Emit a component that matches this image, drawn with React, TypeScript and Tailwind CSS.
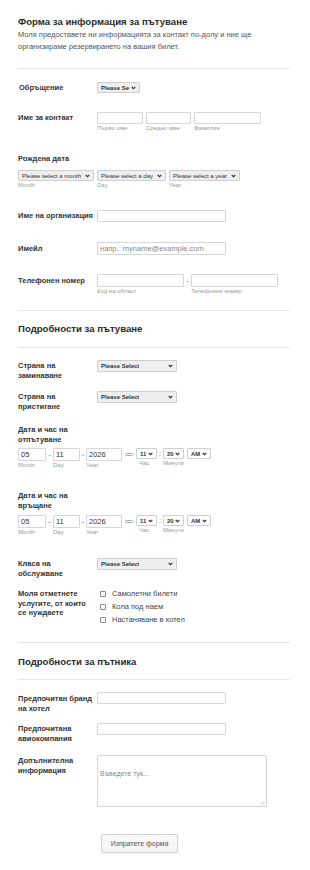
import React from "react";

const Chevron = () => (
  <svg width="5" height="4" viewBox="0 0 10 8" className="shrink-0">
    <polyline points="1.5,2 5,5.5 8.5,2" fill="none" stroke="#333" strokeWidth="2.2" />
  </svg>
);

function Sel({ w, text, bold, gray = true, h = "h-[11px]" }: { w: string; text: string; bold?: boolean; gray?: boolean; h?: string }) {
  return (
    <div
      className={`${w} ${h} flex items-center justify-between border border-[#cfcfcf] rounded-[1px] pl-[3px] pr-[3px] ${gray ? "bg-[#efefef]" : "bg-white"}`}
    >
      <span className={`text-[6px] leading-none text-[#333] whitespace-nowrap overflow-hidden ${bold ? "font-bold" : ""}`}>{text}</span>
      <Chevron />
    </div>
  );
}

function Inp({ w, h = "h-[12px]", value, placeholder }: { w: string; h?: string; value?: string; placeholder?: string }) {
  return (
    <div className={`${w} ${h} border border-[#d6d6d6] bg-white rounded-[1px] flex items-center px-[2px]`}>
      {value && <span className="text-[7.5px] leading-none text-[#333]">{value}</span>}
      {placeholder && <span className="text-[7.5px] leading-none text-[#8a8a8a] whitespace-nowrap">{placeholder}</span>}
    </div>
  );
}

const Sub = ({ children, w }: { children: React.ReactNode; w?: string }) => (
  <div className={`${w ?? ""} text-[6px] leading-[8px] text-[#999] whitespace-nowrap`}>{children}</div>
);

const Label = ({ children, cls = "" }: { children: React.ReactNode; cls?: string }) => (
  <div className={`w-[79px] shrink-0 text-[7.5px] font-bold text-[#333] leading-[9.5px] ${cls}`}>{children}</div>
);

const Divider = ({ cls }: { cls: string }) => <div className={`${cls} h-px bg-[#e6e6e6] w-[272px]`} />;

function DateTimeRow() {
  return (
    <div className="flex items-start">
      <div className="flex flex-col">
        <Inp w="w-[28px]" h="h-[13px]" value="05" />
        <Sub>Month</Sub>
      </div>
      <div className="w-[7px] text-center text-[7px] leading-[13px] text-[#666]">-</div>
      <div className="flex flex-col">
        <Inp w="w-[27px]" h="h-[13px]" value="11" />
        <Sub>Day</Sub>
      </div>
      <div className="w-[6px] text-center text-[7px] leading-[13px] text-[#666]">-</div>
      <div className="flex flex-col">
        <Inp w="w-[36px]" h="h-[13px]" value="2026" />
        <Sub>Year</Sub>
      </div>
      <div className="w-[14px] h-[13px] flex items-center justify-center">
        <div className="w-[8px] h-[3px] border border-[#aaa] rounded-full" />
      </div>
      <div className="flex flex-col">
        <Sel w="w-[21px]" text="11" bold gray={false} />
        <div className="pl-[3px]"><Sub>Час</Sub></div>
      </div>
      <div className="w-[6px] text-center text-[7px] leading-[11px] text-[#666]">:</div>
      <div className="flex flex-col">
        <Sel w="w-[21px]" text="20" bold gray={false} />
        <Sub>Минути</Sub>
      </div>
      <div className="ml-[3px]">
        <Sel w="w-[24px]" text="AM" bold gray={false} />
      </div>
    </div>
  );
}

const Checkbox = ({ text }: { text: string }) => (
  <div className="h-[13px] flex items-center">
    <div className="ml-[3px] w-[6px] h-[6px] border border-[#888] rounded-[1px] bg-white" />
    <span className="ml-[6px] text-[7.5px] leading-none text-[#444]">{text}</span>
  </div>
);

export default function App() {
  return (
    <div className="w-[310px] h-[870px] bg-white pl-[18px] font-['Liberation_Sans',Arial,sans-serif] text-[#333]">
      <div className="pt-[16px]">
        <h1 className="text-[9.6px] leading-[12px] font-bold text-[#2b2b2b]">Форма за информация за пътуване</h1>
        <p className="mt-[1px] text-[7.5px] leading-[12px] text-[#555] w-[262px]">
          Моля предоставете ни информацията за контакт по-долу и ние ще организираме резервирането на вашия билет.
        </p>
      </div>
      <Divider cls="mt-[15px]" />

      {/* Обръщение */}
      <div className="mt-[13px] h-[11px] flex items-center">
        <Label cls="pl-[1px]">Обръщение</Label>
        <Sel w="w-[43px]" text="Please Se" bold />
      </div>

      {/* Име за контакт */}
      <div className="mt-[19px] flex items-start">
        <Label cls="leading-[12px]">Име за контакт</Label>
        <div className="flex gap-[3px]">
          <div className="flex flex-col">
            <Inp w="w-[46px]" />
            <Sub>Първо име</Sub>
          </div>
          <div className="flex flex-col">
            <Inp w="w-[45px]" />
            <Sub>Средно име</Sub>
          </div>
          <div className="flex flex-col">
            <Inp w="w-[67px]" />
            <Sub>Фамилия</Sub>
          </div>
        </div>
      </div>

      {/* Рождена дата */}
      <div className="mt-[22px]">
        <div className="text-[7.5px] font-bold leading-[10px]">Рождена дата</div>
        <div className="mt-[6px] flex gap-[3px]">
          <div className="flex flex-col">
            <Sel w="w-[76px]" text="Please select a month" />
            <Sub>Month</Sub>
          </div>
          <div className="flex flex-col">
            <Sel w="w-[69px]" text="Please select a day" />
            <Sub>Day</Sub>
          </div>
          <div className="flex flex-col">
            <Sel w="w-[71px]" text="Please select a year" />
            <Sub>Year</Sub>
          </div>
        </div>
      </div>

      {/* Org */}
      <div className="mt-[21px] h-[12px] flex items-center">
        <Label cls="whitespace-nowrap">Име на организация</Label>
        <Inp w="w-[129px]" />
      </div>

      {/* Email */}
      <div className="mt-[20px] h-[13px] flex items-center">
        <Label>Имейл</Label>
        <Inp w="w-[129px]" h="h-[13px]" placeholder="напр.: myname@example.com" />
      </div>

      {/* Phone */}
      <div className="mt-[19px] flex items-start">
        <Label cls="leading-[13px]">Телефонен номер</Label>
        <div className="flex flex-col">
          <Inp w="w-[87px]" h="h-[13px]" />
          <Sub>Код на област</Sub>
        </div>
        <div className="w-[7px] text-center text-[7px] leading-[13px] text-[#666]">-</div>
        <div className="flex flex-col">
          <Inp w="w-[87px]" h="h-[13px]" />
          <Sub>Телефонен номер</Sub>
        </div>
      </div>

      <Divider cls="mt-[15px]" />
      <h2 className="mt-[12px] text-[9.6px] leading-[12px] font-bold text-[#2b2b2b]">Подробности за пътуване</h2>
      <Divider cls="mt-[12px]" />

      {/* Страна на заминаване */}
      <div className="mt-[12px] flex items-start">
        <Label cls="pt-[1px]">Страна на<br />заминаване</Label>
        <Sel w="w-[80px]" h="h-[12px]" text="Please Select" bold />
      </div>

      {/* Страна на пристигане */}
      <div className="mt-[11px] flex items-start">
        <Label cls="pt-[1px]">Страна на<br />пристигане</Label>
        <Sel w="w-[80px]" h="h-[12px]" text="Please Select" bold />
      </div>

      {/* Дата и час на отпътуване */}
      <div className="mt-[14px]">
        <Label>Дата и час на<br />отпътуване</Label>
        <div className="mt-[4px]">
          <DateTimeRow />
        </div>
      </div>

      {/* Дата и час на връщане */}
      <div className="mt-[22px]">
        <Label>Дата и час на<br />връщане</Label>
        <div className="mt-[5px]">
          <DateTimeRow />
        </div>
      </div>

      {/* Класа */}
      <div className="mt-[22px] flex items-start">
        <Label cls="pt-[1px]">Класа на<br />обслужване</Label>
        <Sel w="w-[80px]" h="h-[12px]" text="Please Select" bold />
      </div>

      {/* Services */}
      <div className="mt-[9px] flex items-start">
        <Label cls="pt-[2px]">Моля отметнете<br />услугите, от които<br />се нуждаете</Label>
        <div className="flex flex-col">
          <Checkbox text="Самолетни билети" />
          <Checkbox text="Кола под наем" />
          <Checkbox text="Настаняване в хотел" />
        </div>
      </div>

      <Divider cls="mt-[16px]" />
      <h2 className="mt-[13px] text-[9.6px] leading-[12px] font-bold text-[#2b2b2b]">Подробности за пътника</h2>
      <Divider cls="mt-[11px]" />

      {/* Hotel */}
      <div className="mt-[12px] flex items-start">
        <Label cls="pt-[2px]">Предпочитан бранд<br />на хотел</Label>
        <Inp w="w-[129px]" />
      </div>

      {/* Airline */}
      <div className="mt-[10px] flex items-start">
        <Label cls="pt-[1px]">Предпочитана<br />авиокомпания</Label>
        <Inp w="w-[129px]" />
      </div>

      {/* Additional */}
      <div className="mt-[12px] flex items-start">
        <Label cls="pt-[1px]">Допълнителна<br />информация</Label>
        <div className="relative w-[170px] h-[52px] border border-[#d6d6d6] bg-white rounded-[1px] px-[2px] pt-[3px]">
          <span className="text-[7px] leading-none text-[#8a8a8a]">Въведете тук...</span>
          <svg width="5" height="5" viewBox="0 0 10 10" className="absolute right-[1px] bottom-[1px]">
            <line x1="2" y1="9" x2="9" y2="2" stroke="#999" strokeWidth="1" />
            <line x1="6" y1="9" x2="9" y2="6" stroke="#999" strokeWidth="1" />
          </svg>
        </div>
      </div>

      {/* Submit */}
      <div className="mt-[27px] pl-[83px]">
        <div className="w-[77px] h-[19px] border border-[#d3d3d3] bg-[#f6f6f6] rounded-[2px] flex items-center justify-center shadow-[0_1px_1px_rgba(0,0,0,0.05)]">
          <span className="text-[7px] leading-none text-[#555]">Изпратете форма</span>
        </div>
      </div>
    </div>
  );
}
